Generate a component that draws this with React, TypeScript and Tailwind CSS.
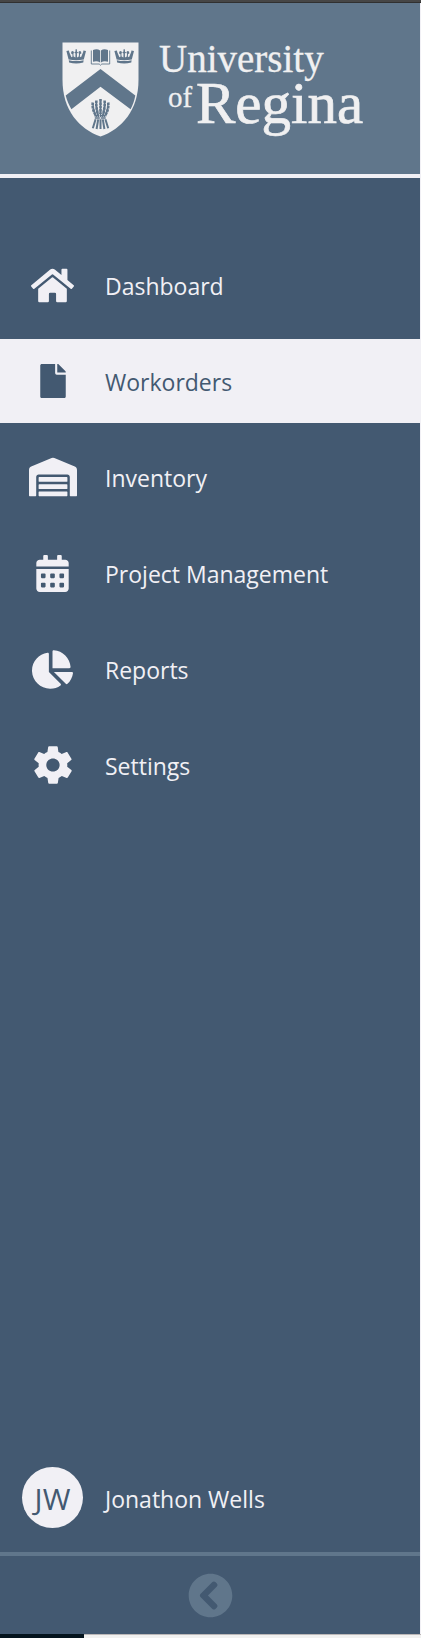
import type { ReactNode } from "react";
import {
  FaCalendarAlt,
  FaChartPie,
  FaChevronCircleLeft,
  FaFile,
  FaHome,
  FaWarehouse,
} from "react-icons/fa";
import { IoMdSettings } from "react-icons/io";

type NavItem = { label: string; icon: ReactNode; active?: boolean };

const items: NavItem[] = [
  { label: "Dashboard", icon: <FaHome className="size-[43px]" /> },
  { label: "Workorders", icon: <FaFile className="size-[34px]" />, active: true },
  { label: "Inventory", icon: <FaWarehouse className="size-12" /> },
  { label: "Project Management", icon: <FaCalendarAlt className="size-[37px]" /> },
  { label: "Reports", icon: <FaChartPie className="size-[41px]" /> },
  { label: "Settings", icon: <IoMdSettings className="size-[46px]" /> },
];

function Crown({ x }: { x: number }) {
  return (
    <g transform={`translate(${x} 7)`} fill="#60768b">
      <path d="M0 2 L2.6 1.4 L2.8 3 L5 8.2 L6.2 7.6 L5.9 5 L4.6 4.4 L5 2.6 L6.4 2 L7.6 3 L7 5 L7.2 7.6 L9 8.4 L9.1 4.6 L7.8 3.4 L9 2.8 L9.2 .2 H10.4 L10.6 2.8 L11.8 3.4 L10.5 4.6 L10.6 8.4 L12.4 7.6 L12.6 5 L12 3 L13.2 2 L14.6 2.6 L15 4.4 L13.7 5 L13.4 7.6 L14.6 8.2 L16.8 3 L17 1.4 L19.6 2 L17.4 10.4 Q9.8 12 2.2 10.4 Z" />
      <path d="M2.4 11.2 Q9.8 13 17.2 11.2 L16.9 13.4 Q9.8 15.4 2.7 13.4 Z" />
    </g>
  );
}

function Logo() {
  return (
    <svg viewBox="0 -6 310 112" className="h-[112px] w-[310px] max-w-full" role="img" aria-label="University of Regina">
      <path
        d="M.5 .5H76.5V38C76.5 68 60 87 38.5 94.5C17 87 .5 68 .5 38Z"
        fill="#f0f0f1"
      />
      <Crown x={4.4} />
      <Crown x={52.4} />
      <g fill="#60768b">
        <path d="M31 8 Q35 6.2 38.1 8.4 V20.4 Q35 18.6 31 19.8Z M38.9 8.4 Q42 6.2 46 8 V19.8 Q42 18.6 38.9 20.4Z" />
        <path d="M29.3 8.5V22H37.2L38.5 23.2L39.8 22H47.7V8.5" fill="none" stroke="#60768b" strokeWidth=".9" />
        <path d="M38.5 27L73.3 53.5C72.4 58.6 70.8 63 68.6 67.3L38.5 44.8L9.4 67.3C7 63 5 58.6 3.7 53.5Z" />
      </g>
      <g stroke="#60768b" fill="none">
        <path d="M31 61Q31 69 34.6 75M46 61Q46 69 42.4 75M34.4 59Q34 68 36.6 75M42.6 59Q43 68 40.4 75M38.5 58V75" strokeWidth="1.2" />
        <path d="M30.8 60.5Q30 67 33.6 73M46.2 60.5Q47 67 43.4 73M34.4 58.5Q33.8 66 36.2 73M42.6 58.5Q43.2 66 40.8 73M38.5 57V72" strokeWidth="2.6" strokeDasharray="2.8 .5" />
        <path d="M32.4 73.8H44.6M32.8 76H44.2" strokeWidth="1.4" strokeDasharray="5 .9" />
        <path d="M33.6 77.3L30.8 86.2M36.2 77.3L34.6 87M38.5 77.3V87M40.8 77.3L42.4 87M43.4 77.3L46.2 86.2" strokeWidth="2" />
      </g>
      <g fill="#f0f0f1" fontFamily="Liberation Serif, serif" stroke="#f0f0f1" strokeWidth=".3">
        <text x="97" y="30" fontSize="39">University</text>
        <text x="106" y="65" fontSize="29">of</text>
        <text x="134" y="81" fontSize="59" strokeWidth=".7">Regina</text>
      </g>
    </svg>
  );
}

export default function App() {
  return (
    <div className="flex min-h-screen flex-col bg-[#435971] font-['Open_Sans','Noto_Sans',sans-serif] text-[#f1f0f5]">
      <div className="h-[3px] border-b border-[#303030] bg-[#464646]" />
      <aside className="flex grow flex-col border-r border-[#f1f0f5]">
        <header className="flex h-[175px] items-center justify-center border-b-4 border-[#f1f0f5] bg-[#60768b] pt-1.5 pl-3.5">
          <Logo />
        </header>
        <nav className="pt-[65px]">
          <ul className="flex flex-col gap-3">
            {items.map((item) => (
              <li key={item.label}>
                <a
                  href="#"
                  aria-current={item.active ? "page" : undefined}
                  className={
                    item.active
                      ? "flex h-[84px] items-center bg-[#f1f0f5] text-[#435971]"
                      : "flex h-[84px] items-center"
                  }
                >
                  <span className="flex w-[105px] shrink-0 justify-center">{item.icon}</span>
                  <span className="pt-0.5 text-[23px] leading-8">{item.label}</span>
                </a>
              </li>
            ))}
          </ul>
        </nav>
        <div className="mt-auto flex items-center pb-6">
          <div className="flex w-[105px] shrink-0 justify-center">
            <span className="flex size-[61px] items-center justify-center rounded-full bg-[#f1f0f5] pt-0.5 text-3xl text-[#435971]">
              JW
            </span>
          </div>
          <span className="pt-0.5 text-[23px] leading-8">Jonathon Wells</span>
        </div>
        <footer className="flex h-[82px] items-center justify-center border-t-4 border-[#60768b]">
          <button type="button" aria-label="Collapse sidebar" className="text-[#60768b]">
            <FaChevronCircleLeft className="size-[45px]" />
          </button>
        </footer>
      </aside>
      <div className="flex h-1">
        <div className="w-1/5 bg-[#04141d]" />
        <div className="grow border-t border-[#bcb8b8] bg-[#f1f1f0]" />
      </div>
    </div>
  );
}
